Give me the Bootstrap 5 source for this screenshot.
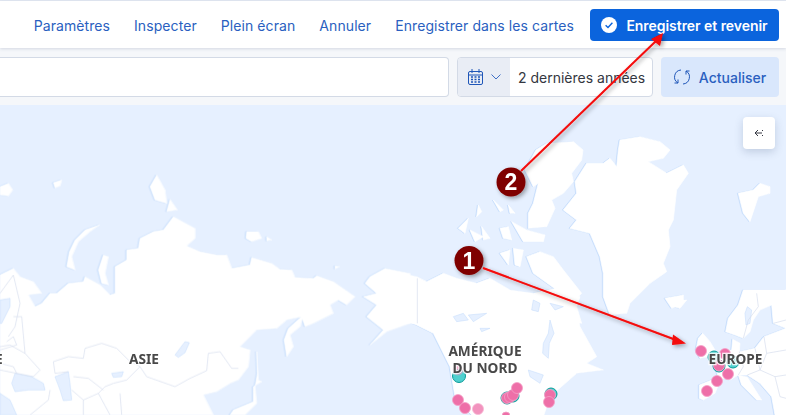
<!DOCTYPE html>
<html lang="fr">
<head>
    <meta charset="UTF-8">
    <meta name="viewport" content="width=device-width, initial-scale=1.0">
    <title>Carte</title>
    <link href="https://cdn.jsdelivr.net/npm/bootstrap@5.3.2/dist/css/bootstrap.min.css" rel="stylesheet">
    <script src="https://cdn.jsdelivr.net/npm/bootstrap@5.3.2/dist/js/bootstrap.bundle.min.js"></script>
    <style>
        html, body { height: 100%; overflow: hidden; }
        body { font-family: Inter, "Liberation Sans", sans-serif; font-size: 14px; background: #f5f7fa; display: flex; flex-direction: column; }
        .topstrip { height: 1px; background: #e3e8f2; flex: none; }
        .appbar { height: 47px; background: #fff; box-shadow: 0 1px 3px rgba(60, 80, 120, .18); flex: none; padding: 1px 7px 0 0; position: relative; z-index: 2; gap: 24px; }
        .appbar-link { color: #2a5fc0; text-decoration: none; font-weight: 400; font-size: 14px; letter-spacing: .08px; }
        .save-btn { background: #0b64dd; border: 0; color: #fff; font-weight: 600; font-size: 14px; height: 32px; width: 189px; border-radius: 4px; gap: 9px; padding: 0; letter-spacing: -.05px; margin-left: -8px; }
        .toolbar { height: 57px; flex: none; padding: 9px 7px 8px 0; gap: 8px; }
        .query-box { flex: 1; background: #fff; border: 1px solid #d3dae6; border-left: 0; border-radius: 0 4px 4px 0; }
        .date-box { width: 196px; background: #fff; border: 1px solid #d3dae6; border-radius: 4px; overflow: hidden; }
        .date-icon { width: 52px; background: #e9edf5; gap: 8px; }
        .date-text { padding-left: 8px; color: #343741; font-size: 14px; white-space: nowrap; }
        .refresh-btn { width: 118px; background: #d9e7fc; color: #2a5fc0; border: 0; border-radius: 4px; font-weight: 500; font-size: 14px; gap: 9px; padding: 0; }
        .map-area { flex: 1; position: relative; background: #e6f0ff; overflow: hidden; }
        .map-svg { position: absolute; left: 0; top: 0; width: 786px; height: 310px; }
        .landmass { filter: drop-shadow(-1px .5px 0 #c3dbfb); }
        .land { fill: #fff; stroke: #fff; stroke-width: 2; stroke-linejoin: round; }
        .lake { fill: #e6f0ff; stroke: #c3dbfb; stroke-width: 1.5; }
        .border-line { fill: none; stroke: #d3dbec; stroke-width: 1.9; stroke-linejoin: round; }
        .geo-label { font-family: "Noto Sans", "Open Sans", sans-serif; font-weight: 700; font-size: 13.7px; fill: #484848; stroke: rgba(255, 255, 255, .85); stroke-width: 2.5px; paint-order: stroke; }
        .pin-pink { fill: #ee6fa8; stroke: #f4a0c6; stroke-width: .8; }
        .pin-teal { fill: #4fd0cf; stroke: #0b9a98; stroke-width: 1; }
        .collapse-tab { position: absolute; left: 743px; top: 12px; width: 32px; height: 32px; background: #fff; border-radius: 4px; box-shadow: 0 3px 8px rgba(60, 80, 120, .22); }
        .callouts { position: absolute; left: 0; top: 0; width: 786px; height: 415px; z-index: 5; pointer-events: none; }
        .callout-num { font-family: "Liberation Sans", sans-serif; font-weight: 700; font-size: 23px; fill: #fff; text-anchor: middle; }
    </style>
</head>
<body>

<div class="topstrip"></div>

<div class="appbar d-flex align-items-center justify-content-end">
    <a class="appbar-link" href="#">Paramètres</a>
    <a class="appbar-link" href="#">Inspecter</a>
    <a class="appbar-link" href="#">Plein écran</a>
    <a class="appbar-link" href="#">Annuler</a>
    <a class="appbar-link" href="#">Enregistrer dans les cartes</a>
    <button type="button" class="btn save-btn d-flex align-items-center justify-content-center">
        <svg width="16" height="16" viewBox="0 0 16 16"><circle cx="8" cy="8" r="8" fill="#fff"/><path d="M4.6 8.2l2.4 2.3 4.4-4.8" fill="none" stroke="#0b64dd" stroke-width="1.4"/></svg>
        Enregistrer et revenir
    </button>
</div>

<div class="toolbar d-flex">
    <div class="query-box"></div>
    <div class="date-box d-flex align-items-center">
        <div class="date-icon h-100 d-flex align-items-center justify-content-center">
            <svg width="15" height="16" viewBox="0 0 15 16"><rect x=".5" y="2.500" width="14" height="13" rx="1.500" fill="none" stroke="#1f56b8"/><path d="M.5 6h14M4 0v4M11 0v4" stroke="#1f56b8" fill="none"/><path d="M3 8h2M6.500 8h2M10 8h2M3 10.500h2M6.500 10.500h2M10 10.500h2M3 13h2M6.500 13h2M10 13h2" stroke="#1f56b8" stroke-width="1.300"/></svg>
            <svg width="10" height="6" viewBox="0 0 10 6"><path d="M.5.5L5 5 9.500.5" fill="none" stroke="#3f6fc6"/></svg>
        </div>
        <span class="date-text">2 dernières années</span>
    </div>
    <button type="button" class="btn refresh-btn d-flex align-items-center justify-content-center">
        <svg width="16" height="16" viewBox="0 0 16 16"><path d="M7 1A7 7 0 0 0 4 14M4 14V10.500M4 14H.5M9 15A7 7 0 0 0 12 2M12 2V5.500M12 2H15.500" fill="none" stroke="#1f56b8"/></svg>
        Actualiser
    </button>
</div>

<div class="map-area">
    <svg class="map-svg" viewBox="0 105 786 310">
        <g class="landmass">
            <!-- eurasie -->
            <g transform="translate(0,160) scale(.3333)">
                <path class="land" d="M0 345L40 325 60 350 100 365 125 400 85 405 105 440 125 430 150 400 170 400 205 370 250 365 255 350 300 375 330 405 345 400 345 320 380 300 380 270 415 265 420 235 460 215 490 210 520 170 585 205 585 235 560 258 600 275 650 285 680 285 695 325 750 315 755 292 815 310 840 328 875 330 885 352 940 355 950 347 1000 365 1065 410 1040 435 1015 420 990 435 1000 460 940 490 915 500 905 470 860 480 830 505 770 510 720 560 750 570 745 620 715 660 690 670 650 695 610 705 640 765 0 765Z"/>
                <path class="land" d="M470 45L495 90 500 130 465 120 450 80Z"/>
                <path class="land" d="M510 118L532 150 500 155Z"/>
                <path class="land" d="M0 80L25 70 38 90 25 108 0 105Z"/>
                <path class="land" d="M160 68L185 60 180 78 165 84Z"/>
                <path class="land" d="M298 195L255 210 225 240 208 275 200 320 225 330 215 290 235 245 270 215Z"/>
                <path class="land" d="M310 285L325 290 315 340 325 375 305 370 295 330Z"/>
                <path class="land" d="M740 215L775 215 785 235 755 245 738 235Z"/>
                <path class="land" d="M800 230L815 240 800 243Z"/>
                <path class="land" d="M1005 318L1018 320 1005 327Z"/>
                <path class="land" d="M910 465L900 500 870 525 880 560 860 590 852 540 865 505Z"/>
                <path class="land" d="M770 575L775 660 785 665 760 680 760 725 700 750 690 765 735 765 770 730 765 680 772 640Z"/>
                <path class="land" d="M1230 340L1155 325 1110 350 1095 370 1130 400 1090 410 1130 435 1100 470 1150 510 1110 555 1160 515 1230 490Z"/>
            </g>
            <!-- amerique du nord, groenland -->
            <g transform="translate(400,150) scale(.3333)">
                <path class="land" d="M-40 360L50 380 80 395 130 370 170 385 230 400 270 385 330 420 400 430 470 415 540 440 530 470 545 520 -40 520Z"/>
                <path class="land" d="M490 180L530 130 525 95 560 40 610 40 630 25 650 50 655 0 660 -30 720 -40 780 -25 810 0 790 25 745 35 800 70 850 45 865 70 830 120 820 210 805 240 810 290 790 340 800 365 750 400 690 460 680 490 630 495 610 440 610 370 600 320 570 250 510 235 530 210Z"/>
                <path class="land" d="M408 0L440 -20 520 -25 549 0 545 30 515 70 520 95 490 130 455 150 465 175 440 230 385 235 385 190 400 160 415 100 400 110 375 60Z"/>
                <path class="land" d="M380 320L420 305 460 320 490 360 545 430 525 450 470 420 400 370Z"/>
                <path class="land" d="M175 235L205 205 195 250Z"/>
                <path class="land" d="M210 240L250 260 225 275Z"/>
                <path class="land" d="M300 235L325 230 335 270 310 265Z"/>
                <path class="land" d="M335 215L380 240 435 255 430 275 370 275Z"/>
                <path class="land" d="M245 230L270 265 250 270Z"/>
                <path class="land" d="M280 150L310 180 300 185Z"/>
                <path class="land" d="M325 165L345 190 330 190Z"/>
                <path class="land" d="M300 310L330 300 325 345Z"/>
                <path class="land" d="M340 295L370 300 360 350 345 345Z"/>
                <path class="land" d="M155 430L200 425 190 460 165 450Z"/>
                <path class="land" d="M235 165L245 185 230 200Z"/>
                <path class="land" d="M1015 130L1060 120 1080 100 1110 110 1110 130 1075 140 1050 215 1030 190Z"/>
                <path class="land" d="M795 445L850 435 850 460 815 475Z"/>
            </g>
            <!-- canada, etats-unis -->
            <g transform="translate(400,300) scale(.3333)">
                <path class="land" d="M-40 40L50 75 100 100 150 200 165 290 220 350 430 350 450 290 530 220 610 210 560 190 590 170 540 80 525 20 520 -10 -40 -10Z"/>
            </g>
            <!-- europe -->
            <g transform="translate(660,300) scale(.3333)">
                <path class="land" d="M128 100L150 125 165 150 150 170 120 175 108 150 115 115Z"/>
                <path class="land" d="M150 170L215 150 218 118 240 130 238 155 285 145 312 110 378 85 378 345 345 345 335 290 300 250 262 225 235 225 210 240 190 235 175 255 165 280 130 300 118 295 118 255 175 232 165 195Z"/>
                <path class="land" d="M235 225L262 232 305 300 290 300 245 255Z"/>
                <path class="land" d="M197 95L205 55 235 15 250 -30 378 -30 378 85 340 70 335 15 300 30 280 60 270 95 250 115 225 105Z"/>
                <path class="land" d="M25 0L80 0 60 25 35 18Z"/>
            </g>
        </g>
        <!-- lacs et frontieres -->
        <g transform="translate(0,160) scale(.3333)">
            <path class="lake" d="M555 545L568 548 555 578 535 592 525 585Z"/>
            <path class="lake" d="M45 640L95 650 130 670 135 690 85 690 45 695 35 670Z"/>
            <path class="lake" d="M165 650L205 635 210 670 215 720 190 722 180 690Z"/>
            <path class="lake" d="M335 640L370 635 365 650 340 652Z"/>
            <path class="lake" d="M0 420L30 415 30 440 5 490 0 490Z"/>
            <path class="lake" d="M0 700L30 720 50 765 0 765Z"/>
            <path class="border-line" d="M255 565L305 550 350 565 385 600M385 600L420 620 440 650 525 680 570 655 620 632 625 580 660 575 695 625 715 625M420 620L380 660 340 670 315 680 295 700M160 605L205 590 250 595 255 565M160 605L165 640 205 635M220 650L265 655 310 690M215 690L250 720 295 700M250 720V765M360 700L365 765M295 700L330 765M150 690L145 720 90 765M40 470L65 470 75 580 120 630 100 650 50 640 0 630M0 560L30 555 75 580M0 610L40 620 50 640M40 345L60 430 45 500 25 530M0 400L40 345M20 545L40 530 50 555 0 570"/>
        </g>
        <g transform="translate(400,150) scale(.3333)">
            <path class="lake" d="M400 450L420 460 415 485 395 480Z"/>
            <path class="lake" d="M450 460L490 470 465 480Z"/>
            <path class="lake" d="M160 500L190 490 205 510 170 515Z"/>
            <path class="border-line" d="M52 385V520"/>
        </g>
        <g transform="translate(400,300) scale(.3333)">
            <path class="lake" d="M450 60L462 100 448 130 445 175 428 160 430 130 445 100Z"/>
            <path class="lake" d="M205 45L260 40 220 65Z"/>
            <path class="lake" d="M385 210L430 225 420 250 390 230Z"/>
            <path class="lake" d="M240 85L270 85 245 95Z"/>
        </g>
        <g transform="translate(660,300) scale(.3333)">
            <path class="lake" d="M255 40L262 20 275 30 270 70 258 75Z"/>
            <path class="border-line" d="M285 145L300 210 262 225M238 155L250 200 235 225M300 210L345 230 378 225M312 110L320 160 378 150M320 160L300 210M345 230L360 290 378 295M250 115L265 60 295 20 290 -20M340 70L378 60"/>
        </g>
        <text class="geo-label" x="129" y="364">ASIE</text>
        <text class="geo-label" x="-5" y="364">E</text>
        <circle class="pin-teal" cx="459" cy="376" r="6.500"/>
        <circle class="pin-pink" cx="458" cy="370" r="5" opacity=".55"/>
        <circle class="pin-pink" cx="458" cy="400" r="5.500"/>
        <circle class="pin-pink" cx="465" cy="408" r="5.500"/>
        <circle class="pin-pink" cx="478" cy="409" r="5.500" opacity=".75"/>
        <circle class="pin-pink" cx="506" cy="416" r="4"/>
        <circle class="pin-teal" cx="507" cy="398" r="6"/>
        <circle class="pin-teal" cx="513" cy="396" r="6"/>
        <circle class="pin-pink" cx="507" cy="398" r="5.500"/>
        <circle class="pin-pink" cx="510" cy="397" r="5.500"/>
        <circle class="pin-pink" cx="513" cy="395" r="5.500"/>
        <circle class="pin-pink" cx="517" cy="388" r="5.500"/>
        <circle class="pin-teal" cx="551" cy="394" r="6"/>
        <circle class="pin-pink" cx="550" cy="395" r="5.500"/>
        <circle class="pin-pink" cx="549" cy="402" r="5.500"/>
        <circle class="pin-teal" cx="714" cy="357" r="6"/>
        <circle class="pin-teal" cx="733" cy="362" r="6"/>
        <circle class="pin-pink" cx="701" cy="351" r="5.500"/>
        <circle class="pin-pink" cx="725" cy="354" r="5.500"/>
        <circle class="pin-teal" cx="719" cy="366" r="6"/>
        <circle class="pin-pink" cx="719" cy="365.500" r="5.500"/>
        <circle class="pin-pink" cx="728" cy="374" r="5.500"/>
        <circle class="pin-pink" cx="717" cy="381" r="5.500"/>
        <circle class="pin-pink" cx="707" cy="391" r="5.500"/>
        <text class="geo-label" x="485" y="356" text-anchor="middle">AMÉRIQUE</text>
        <text class="geo-label" x="485" y="373" text-anchor="middle">DU NORD</text>
        <text class="geo-label" x="735.500" y="364" text-anchor="middle">EUROPE</text>
    </svg>
    <div class="collapse-tab d-flex align-items-center justify-content-center">
        <svg width="10" height="10" viewBox="0 0 10 10"><path d="M8 5H1M4 2L1 5l3 3" fill="none" stroke="#343741"/><path d="M8.500 2v1M8.500 7v1" stroke="#343741"/></svg>
    </div>
</div>

<svg class="callouts" viewBox="0 0 786 415">
    <defs>
        <filter id="arrowShadow" x="-10%" y="-10%" width="120%" height="120%"><feDropShadow dx="2" dy="2" stdDeviation="2" flood-color="#000" flood-opacity=".35"/></filter>
    </defs>
    <g filter="url(#arrowShadow)">
        <line x1="483" y1="268" x2="676" y2="340" stroke="#f40808" stroke-width="2"/>
        <path d="M686 343.500L673 334.500 672 345Z" fill="#f40808"/>
        <line x1="521" y1="171" x2="657" y2="40" stroke="#f40808" stroke-width="2"/>
        <path d="M663 33L651 39 660 46Z" fill="#f40808"/>
        <circle cx="469" cy="260.500" r="14.500" fill="#7f0000"/>
        <circle cx="511" cy="182" r="14.500" fill="#7f0000"/>
    </g>
    <text class="callout-num" x="469" y="268.500">1</text>
    <text class="callout-num" x="511" y="190">2</text>
</svg>

</body>
</html>
